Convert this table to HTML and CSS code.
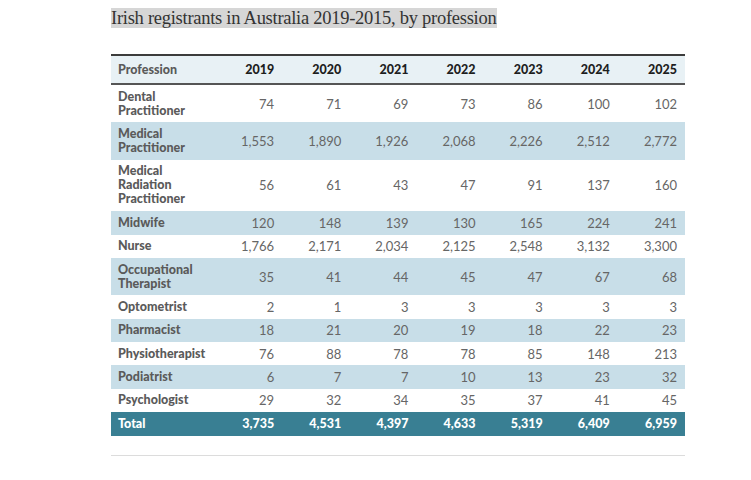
FILE: index.html
```html
<!DOCTYPE html>
<html>
<head>
<meta charset="utf-8">
<link rel="stylesheet" href="styles.css">
</head>
<body>
<div class="wrap">
  <h1 class="title"><span>Irish registrants in Australia 2019-2015, by profession</span></h1>
  <table class="data">
    <thead>
      <tr><th class="lab">Profession</th><th>2019</th><th>2020</th><th>2021</th><th>2022</th><th>2023</th><th>2024</th><th>2025</th></tr>
    </thead>
    <tbody>
      <tr><td class="lab">Dental<br>Practitioner</td><td>74</td><td>71</td><td>69</td><td>73</td><td>86</td><td>100</td><td>102</td></tr>
      <tr><td class="lab">Medical<br>Practitioner</td><td>1,553</td><td>1,890</td><td>1,926</td><td>2,068</td><td>2,226</td><td>2,512</td><td>2,772</td></tr>
      <tr><td class="lab">Medical<br>Radiation<br>Practitioner</td><td>56</td><td>61</td><td>43</td><td>47</td><td>91</td><td>137</td><td>160</td></tr>
      <tr><td class="lab">Midwife</td><td>120</td><td>148</td><td>139</td><td>130</td><td>165</td><td>224</td><td>241</td></tr>
      <tr><td class="lab">Nurse</td><td>1,766</td><td>2,171</td><td>2,034</td><td>2,125</td><td>2,548</td><td>3,132</td><td>3,300</td></tr>
      <tr><td class="lab">Occupational<br>Therapist</td><td>35</td><td>41</td><td>44</td><td>45</td><td>47</td><td>67</td><td>68</td></tr>
      <tr><td class="lab">Optometrist</td><td>2</td><td>1</td><td>3</td><td>3</td><td>3</td><td>3</td><td>3</td></tr>
      <tr><td class="lab">Pharmacist</td><td>18</td><td>21</td><td>20</td><td>19</td><td>18</td><td>22</td><td>23</td></tr>
      <tr><td class="lab">Physiotherapist</td><td>76</td><td>88</td><td>78</td><td>78</td><td>85</td><td>148</td><td>213</td></tr>
      <tr><td class="lab">Podiatrist</td><td>6</td><td>7</td><td>7</td><td>10</td><td>13</td><td>23</td><td>32</td></tr>
      <tr><td class="lab">Psychologist</td><td>29</td><td>32</td><td>34</td><td>35</td><td>37</td><td>41</td><td>45</td></tr>
    </tbody>
    <tfoot>
      <tr><td class="lab">Total</td><td>3,735</td><td>4,531</td><td>4,397</td><td>4,633</td><td>5,319</td><td>6,409</td><td>6,959</td></tr>
    </tfoot>
  </table>
  <div class="rule"></div>
</div>
</body>
</html>
```
FILE: styles.css
```css
html, body {
  margin: 0;
  padding: 0;
  background: #ffffff;
}
.wrap {
  width: 574px;
  margin-left: 111px;
  padding-top: 8px;
}
.title {
  margin: 0;
  height: 46px;
  font-family: "Liberation Serif", serif;
  font-weight: normal;
  font-size: 18.5px;
  line-height: 20px;
  color: #333333;
  letter-spacing: -0.27px;
}
.title span {
  background: #d6d6d6;
  display: inline-block;
  padding: 0 1px 0 0;
}
.data {
  width: 574px;
  border-collapse: collapse;
  table-layout: fixed;
  font-family: Lato, "Open Sans", sans-serif;
  font-size: 13px;
  color: #666666;
}
.data th, .data td {
  box-sizing: border-box;
  text-align: right;
  padding: 4.7px 8px 4.7px 0;
  line-height: 14px;
  width: 67.1px;
}
.data .lab {
  text-align: left;
  width: 104px;
  padding-left: 7px;
  padding-right: 0;
  font-weight: 900;
  font-size: 12.5px;
  color: #5a5a5a;
}
.data thead tr {
  background: #e8f1f5;
  border-top: 2px solid #3c3c3c;
  border-bottom: 2px solid #555555;
}
.data thead th {
  color: #1e1e1e;
  font-weight: 900;
  font-size: 12.5px;
  padding-top: 6.5px;
  padding-bottom: 6.5px;
}
.data tbody tr:nth-child(even) {
  background: #c8dee8;
}
.data tfoot tr {
  background: #397f93;
}
.data tfoot td, .data tfoot .lab {
  color: #ffffff;
  font-weight: 900;
  font-size: 12.5px;
}
.rule {
  margin-top: 19px;
  height: 1px;
  background: #dcdcdc;
}
```
